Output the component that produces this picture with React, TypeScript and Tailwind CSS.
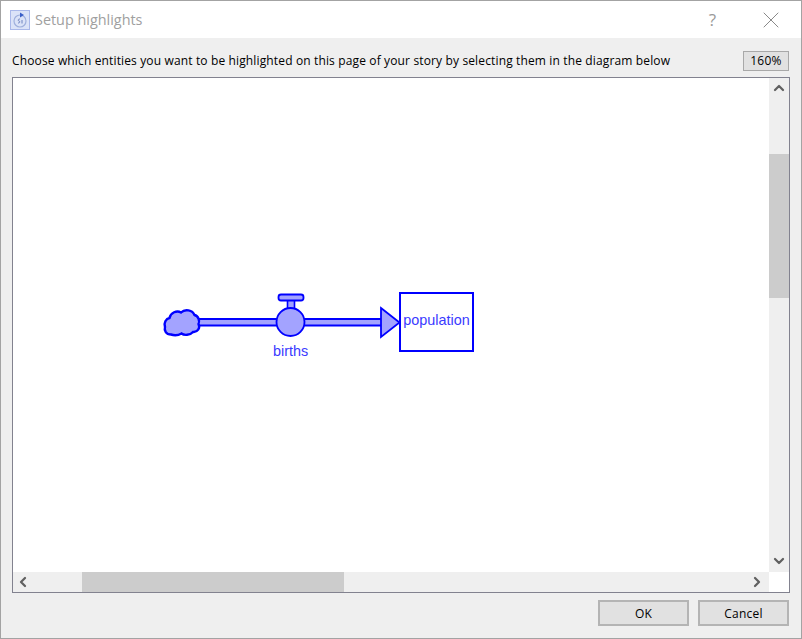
import { ChevronDown, ChevronLeft, ChevronRight, ChevronUp, X } from "lucide-react";

const ui = { fontFamily: '"Open Sans", "Noto Sans", sans-serif' };

function AppIcon() {
  return (
    <div className="w-5 h-5 bg-[#dbe3f8] border border-[#a9b8ea] flex items-center justify-center">
      <svg width="18" height="18" viewBox="0 0 18 18" fill="none">
        <circle cx="9" cy="10" r="6" stroke="#9fb0dc" strokeWidth="1.2" />
        <path d="M9 1.5 L13 4 L9 6.5 Z" fill="#3a5fc8" />
        <path d="M9 8 C7 8 6.5 9.5 8 10 C9.5 10.5 9 12 7 12" stroke="#6f84c0" strokeWidth="1" />
        <path d="M11 9 V12.5" stroke="#6f84c0" strokeWidth="1" />
      </svg>
    </div>
  );
}

function Diagram() {
  return (
    <div className="relative w-[340px] h-[85px] mt-[202px] ml-[137px] shrink-0" style={{ fontFamily: '"Liberation Sans", Arial, sans-serif' }}>
      <svg className="absolute left-0 top-0" width="340" height="85" viewBox="150 280 340 85" fill="none">
        {/* pipe */}
        <rect x="197" y="319" width="185" height="6.5" fill="#a3a3ff" stroke="#0000ff" strokeWidth="2" />
        {/* cloud */}
        <path
          d="M171 334.5 C166 334.5 164 330.5 165 327 C163.5 323 166 318.5 169.5 318 C170.5 312.5 177 310 181 312.5 C185 308.5 192.5 310 194.5 315 C198.5 316 200 321 198.5 324 C200.5 328 197.5 332.5 193 332 C190 335.5 184 335.5 181.5 333.5 C178 335.5 174 335.5 171 334.5 Z"
          fill="#a3a3ff"
          stroke="#0000ff"
          strokeWidth="2.4"
        />
        {/* valve */}
        <rect x="287.5" y="300" width="7" height="9" fill="#a3a3ff" stroke="#0000ff" strokeWidth="1.6" />
        <rect x="278.5" y="294.5" width="25" height="6" rx="2.5" fill="#a3a3ff" stroke="#0000ff" strokeWidth="1.8" />
        <circle cx="290.5" cy="322" r="14" fill="#a3a3ff" stroke="#0000ff" strokeWidth="1.8" />
        {/* arrow head */}
        <path d="M381 308 L399.5 322.5 L381 337 Z" fill="#a3a3ff" stroke="#0000ff" strokeWidth="1.8" />
      </svg>
      <div className="absolute left-[249px] top-[12px] w-[75px] h-[60px] border-2 border-[#0000ff] bg-white flex items-center justify-center pb-[3px] text-[14.4px] text-[#3a3aff]">
        population
      </div>
      <span className="absolute left-[123px] top-[63px] text-[14.4px] leading-4 text-[#3a3aff]">births</span>
    </div>
  );
}

export default function App() {
  return (
    <div className="w-[802px] h-[639px] border border-[#a3a3a3] bg-[#efefef] flex flex-col overflow-hidden" style={ui}>
      <div className="h-[37px] bg-white flex items-center pl-[9px] shrink-0">
        <AppIcon />
        <span className="ml-[5px] text-[14.4px] text-[#a0a0a0]">Setup highlights</span>
        <span className="ml-auto text-[17px] text-[#999999] mr-[41px]">?</span>
        <X className="w-[28px] h-[28px] text-[#808080] mr-[16px]" strokeWidth={0.8} />
      </div>

      <div className="flex items-center justify-between pl-[11px] pr-[12px] pt-[7px] h-[39px] shrink-0">
        <span className="text-[12px] tracking-[0.14px] text-black">
          Choose which entities you want to be highlighted on this page of your story by selecting them in the diagram below
        </span>
        <span className="w-[46px] h-[20px] border border-[#a8a8a8] bg-[#e1e1e1] flex items-center justify-center text-[12px] tracking-[0.3px] text-black">
          160%
        </span>
      </div>

      <div className="mx-[11px] h-[516px] border border-[#82828f] bg-white flex flex-col shrink-0 w-[778px]">
        <div className="flex flex-1 min-h-0">
          <div className="flex-1 min-w-0 overflow-hidden">
            <Diagram />
          </div>
          <div className="w-[20px] bg-[#efefef] flex flex-col items-center">
            <ChevronUp className="w-4 h-4 mt-[2px] text-[#606060]" strokeWidth={3.4} />
            <div className="w-full h-[144px] bg-[#cccccc] mt-[58px]" />
            <ChevronDown className="w-4 h-4 mt-auto mb-[3px] text-[#606060]" strokeWidth={3.4} />
          </div>
        </div>
        <div className="h-[20px] flex shrink-0">
          <div className="w-[756px] h-full bg-[#efefef] flex items-center">
            <ChevronLeft className="w-4 h-4 ml-[2px] text-[#606060]" strokeWidth={3.4} />
            <div className="h-full w-[262px] bg-[#cccccc] ml-[51px]" />
            <ChevronRight className="w-4 h-4 ml-[405px] text-[#606060]" strokeWidth={3.4} />
          </div>
        </div>
      </div>

      <div className="flex justify-end gap-[9px] pr-[12px] pt-[7px]">
        <button className="w-[91px] h-[26px] border-2 border-[#b4b4b4] bg-[#e1e1e1] pt-[1px] text-[12px] tracking-[0.2px] text-black">OK</button>
        <button className="w-[91px] h-[26px] border-2 border-[#b4b4b4] bg-[#e1e1e1] pt-[1px] text-[12px] tracking-[0.2px] text-black">Cancel</button>
      </div>
    </div>
  );
}
